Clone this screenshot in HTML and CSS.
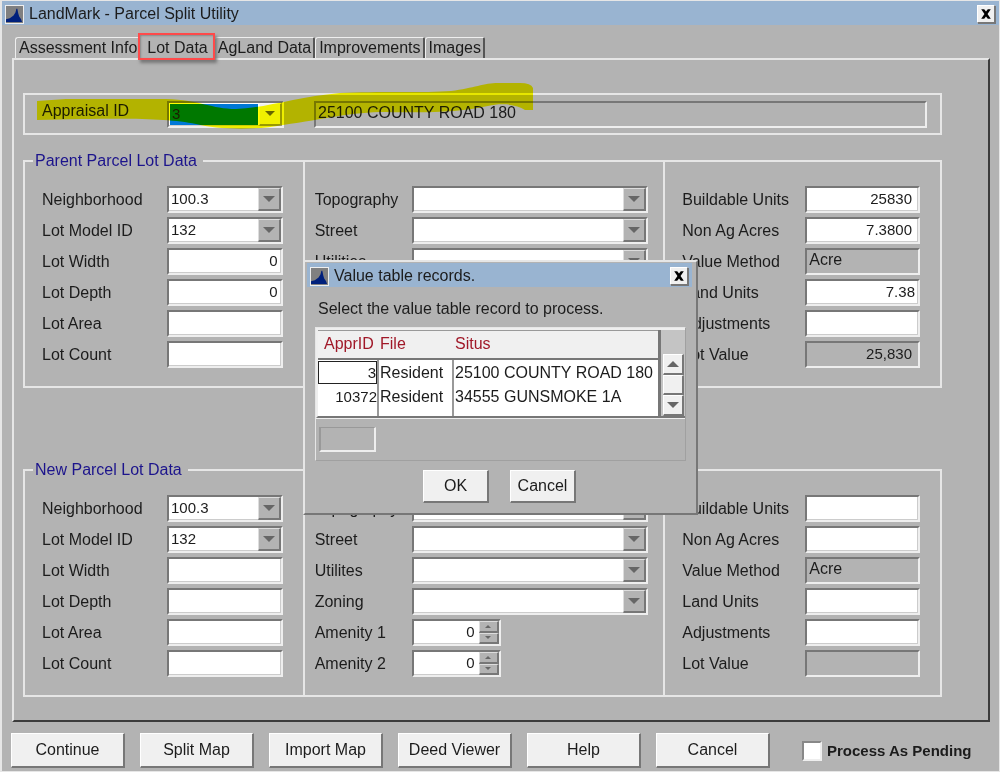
FILE: index.html
```html
<!DOCTYPE html>
<html lang="en">
<head>
<meta charset="utf-8">
<title>LandMark - Parcel Split Utility</title>
<link rel="stylesheet" href="styles.css">
</head>
<body>
<main class="window">
  <header class="titlebar">
    <svg class="logo" viewBox="0 0 18 18" aria-hidden="true"><rect width="18" height="18" fill="#808080"/><path d="M0 17V14L4 13L8 10L10 7L11 3L12 3L13 8L14 11L16 14L17 17Z" fill="#00207c"/></svg>
    <h1 class="title">LandMark - Parcel Split Utility</h1>
    <button class="close" aria-label="Close"><svg viewBox="0 0 10 10"><path d="M1 1H3.500L5 3L6.500 1H9L6.300 5L9 9H6.500L5 7L3.500 9H1L3.700 5Z"/></svg></button>
  </header>

  <nav class="tabs" role="tablist">
    <button class="tab" role="tab">Assessment Info</button>
    <button class="tab tab-marked" role="tab" aria-selected="true">Lot Data</button>
    <button class="tab" role="tab">AgLand Data</button>
    <button class="tab" role="tab">Improvements</button>
    <button class="tab" role="tab">Images</button>
  </nav>

  <section class="panel">
    <div class="appraisal">
      <label class="label" for="appraisal">Appraisal ID</label>
      <div class="field combo combo-active"><select id="appraisal"><option>3</option></select><span class="arrow"></span></div>
      <input class="field shaded address" aria-label="Address" value="25100 COUNTY ROAD 180" readonly>
      <svg class="marker" viewBox="0 0 500 50" aria-hidden="true"><path d="M1 21L30 19H130C165 20 175 29 200 29C230 28 260 17 304 13C340 11 390 13 415 11C438 8 448 3 462 3H484Q495 3 497 8V30H489C480 24 465 23 452 26C425 32 395 33 350 32C315 32 290 39 247 45C215 51 180 49 160 44C130 38 90 38 1 40Z"/></svg>
    </div>

    <fieldset class="group">
      <legend>Parent Parcel Lot Data</legend>
      <div class="columns">
        <div class="column">
          <div class="row"><label class="label" for="p-nbhd">Neighborhood</label><div class="field combo"><select id="p-nbhd"><option>100.3</option></select><span class="arrow"></span></div></div>
          <div class="row"><label class="label" for="p-model">Lot Model ID</label><div class="field combo"><select id="p-model"><option>132</option></select><span class="arrow"></span></div></div>
          <div class="row"><label class="label" for="p-width">Lot Width</label><input class="field number" id="p-width" value="0"></div>
          <div class="row"><label class="label" for="p-depth">Lot Depth</label><input class="field number" id="p-depth" value="0"></div>
          <div class="row"><label class="label" for="p-area">Lot Area</label><input class="field number" id="p-area"></div>
          <div class="row"><label class="label" for="p-count">Lot Count</label><input class="field number" id="p-count"></div>
        </div>
        <div class="column middle">
          <div class="row"><label class="label" for="p-topo">Topography</label><div class="field combo"><select id="p-topo"></select><span class="arrow"></span></div></div>
          <div class="row"><label class="label" for="p-street">Street</label><div class="field combo"><select id="p-street"></select><span class="arrow"></span></div></div>
          <div class="row"><label class="label" for="p-util">Utilities</label><div class="field combo"><select id="p-util"></select><span class="arrow"></span></div></div>
        </div>
        <div class="column last">
          <div class="row"><label class="label" for="p-build">Buildable Units</label><input class="field number inset" id="p-build" value="25830"></div>
          <div class="row"><label class="label" for="p-acres">Non Ag Acres</label><input class="field number inset" id="p-acres" value="7.3800"></div>
          <div class="row"><label class="label" for="p-method">Value Method</label><input class="field shaded" id="p-method" value="Acre" readonly></div>
          <div class="row"><label class="label" for="p-land">Land Units</label><input class="field number" id="p-land" value="7.38"></div>
          <div class="row"><label class="label" for="p-adj">Adjustments</label><input class="field number" id="p-adj"></div>
          <div class="row"><label class="label" for="p-value">Lot Value</label><input class="field number shaded inset" id="p-value" value="25,830" readonly></div>
        </div>
      </div>
    </fieldset>

    <fieldset class="group">
      <legend>New Parcel Lot Data</legend>
      <div class="columns">
        <div class="column">
          <div class="row"><label class="label" for="n-nbhd">Neighborhood</label><div class="field combo"><select id="n-nbhd"><option>100.3</option></select><span class="arrow"></span></div></div>
          <div class="row"><label class="label" for="n-model">Lot Model ID</label><div class="field combo"><select id="n-model"><option>132</option></select><span class="arrow"></span></div></div>
          <div class="row"><label class="label" for="n-width">Lot Width</label><input class="field number" id="n-width"></div>
          <div class="row"><label class="label" for="n-depth">Lot Depth</label><input class="field number" id="n-depth"></div>
          <div class="row"><label class="label" for="n-area">Lot Area</label><input class="field number" id="n-area"></div>
          <div class="row"><label class="label" for="n-count">Lot Count</label><input class="field number" id="n-count"></div>
        </div>
        <div class="column middle">
          <div class="row"><label class="label" for="n-topo">Topography</label><div class="field combo"><select id="n-topo"></select><span class="arrow"></span></div></div>
          <div class="row"><label class="label" for="n-street">Street</label><div class="field combo"><select id="n-street"></select><span class="arrow"></span></div></div>
          <div class="row"><label class="label" for="n-util">Utilites</label><div class="field combo"><select id="n-util"></select><span class="arrow"></span></div></div>
          <div class="row"><label class="label" for="n-zoning">Zoning</label><div class="field combo"><select id="n-zoning"></select><span class="arrow"></span></div></div>
          <div class="row"><label class="label" for="n-am1">Amenity 1</label><div class="field spinner"><input id="n-am1" value="0"><span class="steps"><button class="step up" aria-label="Increase"></button><button class="step down" aria-label="Decrease"></button></span></div></div>
          <div class="row"><label class="label" for="n-am2">Amenity 2</label><div class="field spinner"><input id="n-am2" value="0"><span class="steps"><button class="step up" aria-label="Increase"></button><button class="step down" aria-label="Decrease"></button></span></div></div>
        </div>
        <div class="column last">
          <div class="row"><label class="label" for="n-build">Buildable Units</label><input class="field number" id="n-build"></div>
          <div class="row"><label class="label" for="n-acres">Non Ag Acres</label><input class="field number" id="n-acres"></div>
          <div class="row"><label class="label" for="n-method">Value Method</label><input class="field shaded" id="n-method" value="Acre" readonly></div>
          <div class="row"><label class="label" for="n-land">Land Units</label><input class="field number" id="n-land"></div>
          <div class="row"><label class="label" for="n-adj">Adjustments</label><input class="field number" id="n-adj"></div>
          <div class="row"><label class="label" for="n-value">Lot Value</label><input class="field number shaded" id="n-value" readonly></div>
        </div>
      </div>
    </fieldset>
  </section>

  <footer class="actions">
    <button class="button">Continue</button>
    <button class="button">Split Map</button>
    <button class="button">Import Map</button>
    <button class="button">Deed Viewer</button>
    <button class="button">Help</button>
    <button class="button">Cancel</button>
    <label class="pending"><input type="checkbox">Process As Pending</label>
  </footer>

  <section class="dialog" role="dialog" aria-labelledby="dialog-title">
    <header class="titlebar">
      <svg class="logo" viewBox="0 0 18 18" aria-hidden="true"><rect width="18" height="18" fill="#808080"/><path d="M0 17V14L4 13L8 10L10 7L11 3L12 3L13 8L14 11L16 14L17 17Z" fill="#00207c"/></svg>
      <h2 class="title" id="dialog-title">Value table records.</h2>
      <button class="close" aria-label="Close"><svg viewBox="0 0 10 10"><path d="M1 1H3.500L5 3L6.500 1H9L6.300 5L9 9H6.500L5 7L3.500 9H1L3.700 5Z"/></svg></button>
    </header>
    <p class="prompt">Select the value table record to process.</p>
    <div class="records">
      <div class="records-top">
        <table class="grid">
          <colgroup><col class="col-id"><col class="col-file"><col></colgroup>
          <thead><tr><th>ApprID</th><th>File</th><th>Situs</th></tr></thead>
          <tbody>
            <tr><td class="id"><span class="cell-focus">3</span></td><td>Resident</td><td>25100 COUNTY ROAD 180</td></tr>
            <tr><td class="id">10372</td><td>Resident</td><td>34555 GUNSMOKE 1A</td></tr>
          </tbody>
        </table>
        <div class="scrollbar">
          <button class="scroll-button scroll-up" aria-label="Scroll up"></button>
          <span class="scroll-button"></span>
          <button class="scroll-button scroll-down" aria-label="Scroll down"></button>
        </div>
      </div>
      <div class="records-foot"><span class="foot-box"></span></div>
    </div>
    <div class="choices">
      <button class="button small">OK</button>
      <button class="button small">Cancel</button>
    </div>
  </section>
</main>
</body>
</html>
```

FILE: styles.css
```css
* {
  box-sizing: border-box;
}

body {
  margin: 0;
  background: #b3b3b3;
  color: #1c1c1c;
  font: 16px/20px "Liberation Sans", Arial, sans-serif;
}

button,
input,
select {
  margin: 0;
  padding: 0;
  border: 0;
  border-radius: 0;
  appearance: none;
  background: transparent;
  color: inherit;
  font: inherit;
  outline: none;
}

.window {
  position: relative;
  min-height: 100vh;
  border: 1px solid #e6e6e6;
  border-left-width: 2px;
}

.titlebar {
  display: flex;
  align-items: center;
  height: 24px;
  padding: 2px 3px 0;
  gap: 5px;
  background: #99b4d1;
}

.logo {
  width: 19px;
  height: 19px;
  border: 1px solid #eee;
}

.title {
  flex: 1;
  margin: 0;
  font-size: 16px;
  font-weight: normal;
}

.close {
  display: grid;
  place-items: center;
  width: 18px;
  height: 18px;
  margin-right: 1px;
  background: #f0f0f0;
  border: 1px solid #fff;
  border-right-color: #777;
  border-bottom-color: #777;
  box-shadow: 1px 1px #777;
}

.close svg {
  width: 12px;
  height: 12px;
}

.tabs {
  display: flex;
  padding: 12px 13px 0;
}

.tab {
  height: 21px;
  padding: 0 2px 0 3px;
  border-top: 1px solid #eee;
  border-left: 1px solid #eee;
  border-right: 2px solid #555;
  border-radius: 3px 2px 0 0;
  white-space: nowrap;
}

.tab:first-child {
  border-right-color: transparent;
}

.tab-marked {
  position: relative;
  padding: 0 4px 0 5px;
  border-color: transparent;
}

.tab-marked::after {
  content: "";
  position: absolute;
  inset: -5px -3px -2px -4px;
  border: 2px solid #ff4a4a;
  box-shadow: 2px 3px 3px #777, inset 1px 1px 2px #888;
}

.panel {
  margin: 0 9px 0 10px;
  padding: 33px 46px 23px 9px;
  border: 2px solid #e6e6e6;
  border-right-color: #3c3c3c;
  border-bottom-color: #3c3c3c;
}

.appraisal {
  position: relative;
  display: flex;
  align-items: center;
  height: 42px;
  padding: 0 13px 0 17px;
  border: 2px solid #e6e6e6;
}

.appraisal .label {
  align-self: flex-start;
  padding-top: 6px;
}

.label {
  flex: none;
  width: 125px;
}

.field {
  flex: 1;
  width: 100%;
  min-width: 0;
  height: 27px;
  padding: 0 3px 3px 2px;
  border: 2px solid #777;
  border-right-color: #eee;
  border-bottom-color: #eee;
  background: #fff;
  box-shadow: inset -1px -1px #ccc;
}

.number {
  font-size: 15px;
  text-align: right;
}

.inset {
  padding-right: 6px;
}

.shaded {
  background: #b3b3b3;
  box-shadow: none;
}

.combo,
.spinner {
  display: flex;
  padding: 0;
  font-size: 15px;
}

.combo select {
  flex: 1;
  min-width: 0;
  padding: 0 0 2px 2px;
}

.arrow {
  display: grid;
  flex: none;
  place-items: center;
  width: 23px;
  border: 1px solid #ddd;
  border-right: 2px solid #777;
  border-bottom: 2px solid #777;
  background: #b3b3b3;
}

.arrow::after {
  content: "";
  border: 6px solid transparent;
  border-top-color: #666;
  border-bottom: 0;
}

.combo-active {
  flex: 0 0 117px;
}

.combo-active select {
  margin: 1px;
  background: #0078d7;
}

.combo-active .arrow {
  background: #f0f0f0;
  border-color: #f8f8f8 #999 #999 #f8f8f8;
}

.combo-active .arrow::after {
  border-width: 5px 5px 0;
}

.address {
  margin-left: 30px;
}

.marker {
  position: absolute;
  top: -15px;
  left: 11px;
  width: 500px;
  height: 50px;
  fill: #ff0;
  mix-blend-mode: multiply;
  pointer-events: none;
}

.group {
  min-width: 0;
  margin: 16px 0 0;
  padding: 0;
  border: 2px solid #e6e6e6;
}

.group + .group {
  margin-top: 72px;
}

.group legend {
  margin-left: 8px;
  padding: 0 6px 0 2px;
  color: #1c148c;
}

.columns {
  display: grid;
  grid-template-columns: minmax(0, 278fr) minmax(0, 363fr) minmax(0, 275fr);
}

.column {
  padding: 13px 20px 16px 17px;
}

.middle {
  margin-top: -10px;
  padding: 23px 15px 16px 10px;
  border: solid #e6e6e6;
  border-width: 0 2px;
}

.middle .label {
  width: 97px;
}

.last .label {
  width: 123px;
}

.row {
  display: flex;
  align-items: center;
  height: 31px;
}

.spinner {
  flex: 0 0 89px;
}

.spinner input {
  flex: 1;
  min-width: 0;
  padding: 0 4px 2px 0;
  text-align: right;
}

.steps {
  display: grid;
  grid-template-rows: 1fr 1fr;
  width: 20px;
}

.step {
  display: grid;
  place-items: center;
  border: 1px solid #ddd;
  border-right: 2px solid #777;
  border-bottom: 2px solid #777;
  background: #b3b3b3;
}

.step::after,
.scroll-up::after,
.scroll-down::after {
  content: "";
  border: 3px solid transparent;
}

.up::after,
.scroll-up::after {
  border-top: 0;
  border-bottom-color: #666;
}

.down::after,
.scroll-down::after {
  border-bottom: 0;
  border-top-color: #666;
}

.actions {
  display: flex;
  align-items: center;
  gap: 15px;
  padding: 11px 20px 3px 9px;
}

.button {
  flex: 0 1 114px;
  height: 35px;
  border: 1px solid #fff;
  border-right: 2px solid #777;
  border-bottom: 2px solid #777;
  background: #f0f0f0;
  white-space: nowrap;
}

.pending {
  display: flex;
  align-items: center;
  gap: 5px;
  margin-left: 17px;
  font-size: 15px;
  font-weight: bold;
  white-space: nowrap;
}

.pending input {
  width: 20px;
  height: 20px;
  border: 2px solid #888;
  border-right-color: #eee;
  border-bottom-color: #eee;
  background: #fff;
}

.dialog {
  position: absolute;
  top: 259px;
  left: 301px;
  width: 395px;
  padding: 1px 4px 10px 2px;
  border: 2px solid #e6e6e6;
  border-right-color: #777;
  border-bottom-color: #777;
  background: #b3b3b3;
}

.prompt {
  margin: 12px 0 8px 11px;
}

.records {
  margin: 0 6px 0 8px;
  border: 1px solid #e6e6e6;
  border-right-color: #a0a0a0;
  border-bottom-color: #a0a0a0;
}

.records-top {
  display: flex;
  height: 90px;
  border: 2px solid #eee;
  border-right: 0;
  border-bottom-color: #777;
}

.grid {
  flex: 1;
  height: 86px;
  border-collapse: collapse;
  table-layout: fixed;
  border-right: 3px solid #777;
  background: #fff;
  white-space: nowrap;
}

.col-id {
  width: 60px;
}

.col-file {
  width: 75px;
}

.grid th {
  height: 28px;
  padding: 0 2px;
  border-top: 1px solid #999;
  border-bottom: 2px solid #777;
  background: #f0f0f0;
  color: #a01828;
  font-weight: normal;
  text-align: left;
}

.grid th:first-child {
  padding-left: 6px;
}

.grid td {
  height: 26px;
  padding: 0 1px;
  line-height: 23px;
}

.grid tr:last-child td {
  height: 30px;
  vertical-align: top;
}

.grid td + td {
  border-left: 2px solid #999;
}

.grid .id {
  padding: 0;
  font-size: 15px;
  text-align: right;
}

.cell-focus {
  display: block;
  border: 1px solid #222;
  line-height: 21px;
}

.scrollbar {
  display: flex;
  flex: none;
  flex-direction: column;
  width: 24px;
  padding: 24px 1px 0 2px;
  background: #c4c4c4;
}

.scroll-button {
  display: grid;
  flex: 1;
  place-items: center;
  border: 1px solid #fff;
  border-right: 2px solid #777;
  border-bottom: 2px solid #777;
  background: #f0f0f0;
}

.scroll-up::after,
.scroll-down::after {
  border-left-width: 6px;
  border-right-width: 6px;
}

.scroll-up::after {
  border-bottom-width: 6px;
}

.scroll-down::after {
  border-top-width: 6px;
}

.records-foot {
  padding: 8px 3px;
  border-top: 1px solid #eee;
}

.foot-box {
  display: block;
  width: 57px;
  height: 25px;
  border: 1px solid #999;
  border-left-width: 2px;
  border-right: 2px solid #eee;
  border-bottom: 2px solid #eee;
}

.choices {
  display: flex;
  justify-content: center;
  gap: 21px;
  margin-top: 9px;
}

.small {
  flex-basis: 66px;
  height: 33px;
}
```
